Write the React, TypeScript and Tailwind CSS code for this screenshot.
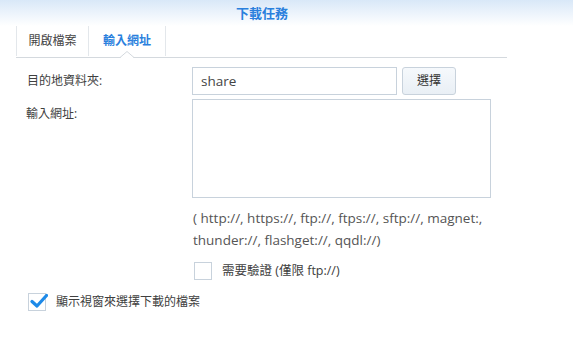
import React from "react";

const font = { fontFamily: '"Open Sans", "Noto Sans CJK TC", sans-serif' };

export default function App() {
  return (
    <div className="w-[573px] h-[354px] bg-white overflow-hidden text-[12px] text-[#404040]" style={font}>
      {/* title bar */}
      <div className="h-[26px] bg-gradient-to-b from-[#d9e8f8] to-white flex items-center pl-[236px]">
        <span className="text-[13px] font-bold text-[#2a80dd] leading-none">下載任務</span>
      </div>
      {/* tabs */}
      <div className="relative ml-[16px] w-[491px] h-[32px] border-b border-[#d4d9de] flex">
        <div className="w-[73px] h-[30px] flex items-center justify-center border-l border-[#e3e7eb] border-r text-[#444]">
          開啟檔案
        </div>
        <div className="w-[77px] h-[30px] flex items-center justify-center border-r border-[#e3e7eb] font-bold text-[#2a80dd]">
          輸入網址
        </div>
        <svg className="absolute left-[104px] bottom-[-1px]" width="14" height="7" viewBox="0 0 14 7">
          <path d="M0 6.5 L7 0.5 L14 6.5" fill="white" stroke="#d4d9de" strokeWidth="1" />
          <rect x="1" y="6" width="12" height="1" fill="white" />
        </svg>
      </div>
      {/* form */}
      <div className="pl-[26px] pt-[9px]">
        <div className="flex">
          <div className="w-[166px] h-[28px] flex items-center pl-[1px]">目的地資料夾:</div>
          <div className="flex gap-[5px]">
            <div className="w-[205px] h-[28px] border border-[#c8d2dc] flex items-center pl-[8px] text-[13.5px] text-[#444]">share</div>
            <div className="w-[54px] h-[28px] border border-[#c8d2dc] rounded-[3px] bg-gradient-to-b from-[#f6f9fc] to-[#e9eff5] flex items-center justify-center text-[#333]">選擇</div>
          </div>
        </div>
        <div className="flex mt-[4px]">
          <div className="w-[166px] pt-[6px]">輸入網址:</div>
          <div>
            <div className="w-[299px] h-[99px] border border-[#c8d2dc]" />
            <div className="mt-[9px] pl-[1px] leading-[22px] text-[13.5px] text-[#555] w-[320px]">
              ( http://, https://, ftp://, ftps://, sftp://, magnet:,
              <br />
              thunder://, flashget://, qqdl://)
            </div>
            <div className="mt-[11px] flex items-center pl-[2px]">
              <div className="w-[18px] h-[18px] border border-[#c8d2dc] bg-white" />
              <span className="ml-[10px] text-[12.5px]">需要驗證 (僅限 ftp://)</span>
            </div>
          </div>
        </div>
        <div className="mt-[12px] flex items-center pl-[2px]">
          <div className="relative w-[18px] h-[18px] border border-[#c8d2dc] bg-white">
            <svg className="absolute left-[1px] top-[-2px]" width="18" height="18" viewBox="0 0 18 18">
              <path d="M2 9.5 L7 14 L16.5 3.5" fill="none" stroke="#1e8ae8" strokeWidth="3.2" strokeLinecap="round" strokeLinejoin="round" />
            </svg>
          </div>
          <span className="ml-[10px]">顯示視窗來選擇下載的檔案</span>
        </div>
      </div>
    </div>
  );
}
